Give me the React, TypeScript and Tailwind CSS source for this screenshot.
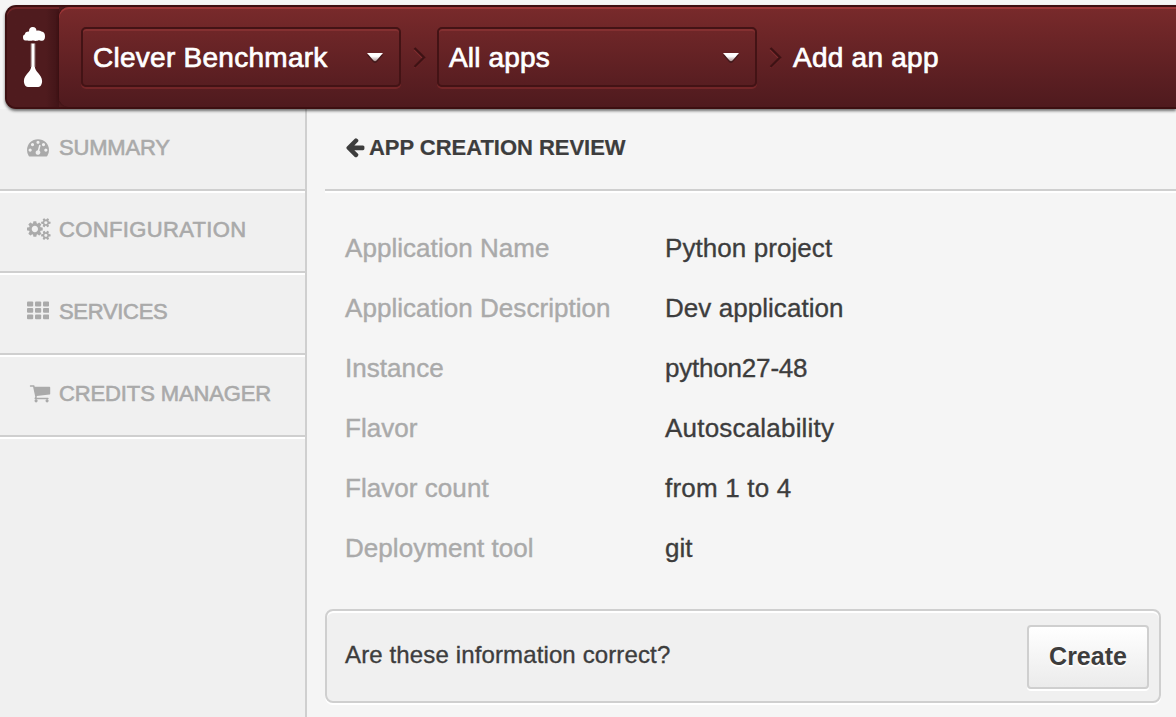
import React from "react";

const DOT = "q0-53-37.5-90.5t-90.5-37.5-90.5 37.5-37.5 90.5 37.5 90.5 90.5 37.5 90.5-37.5 37.5-90.5z";
const SMALL_COG =
  "v140q0 16-149 31-12 27-30 52 51 113 51 138 0 4-4 7-122 71-124 71-8 0-46-47t-52-68q-20 2-30 2t-30-2q-14 21-52 68t-46 47q-2 0-124-71-4-3-4-7 0-25 51-138-18-25-30-52-149-15-149-31v-140q0-16 149-31 13-29 30-52-51-113-51-138 0-4 4-7 4-2 35-20t59-34 30-16q8 0 46 46.5t52 67.5q20-2 30-2t30 2q51-71 92-112l6-2q4 0 124 70 4 3 4 7 0 25-51 138 17 23 30 52 149 15 149 31z";

function GaugeIcon() {
  return (
    <svg className="h-[22px] w-[22px]" viewBox="0 0 1792 1792" fill="currentColor">
      <path
        d={`M384 1152${DOT}m192-448${DOT}m428 481l101-382q6-26-7.5-48.5t-38.5-29.5-48 6.5-30 39.5l-101 382q-60 5-107 43.5t-63 98.5q-20 77 20 146t117 89 146-20 89-117q16-60-6-117t-72-91zm660-33${DOT}m-640-640${DOT}m448 192${DOT}m320 448q0 261-141 483-19 29-54 29h-1402q-35 0-54-29-141-221-141-483 0-182 71-348t191-286 286-191 348-71 348 71 286 191 191 286 71 348z`}
      />
    </svg>
  );
}

function CogsIcon() {
  return (
    <svg className="h-[22px] w-[24px]" viewBox="0 0 1955 1792" fill="currentColor">
      <path
        d={`M896 896q0-106-75-181t-181-75-181 75-75 181 75 181 181 75 181-75 75-181zm768 512q0-52-38-90t-90-38-90 38-38 90q0 53 37.5 90.5t90.5 37.5 90.5-37.5 37.5-90.5zm0-1024q0-52-38-90t-90-38-90 38-38 90q0 53 37.5 90.5t90.5 37.5 90.5-37.5 37.5-90.5zm-384 421v185q0 10-7 19.5t-16 10.5l-155 24q-11 35-32 76 34 48 90 115 7 11 7 20 0 12-7 19-23 30-82.5 89.5t-78.5 59.5q-11 0-21-7l-115-90q-37 19-77 31-11 108-23 155-7 24-30 24h-186q-11 0-20-7.5t-10-17.5l-23-153q-34-10-75-31l-118 89q-7 7-20 7-11 0-21-8-144-133-144-160 0-9 7-19 10-14 41-53t47-61q-23-44-35-82l-152-24q-10-1-17-9.5t-7-19.5v-185q0-10 7-19.5t16-10.5l155-24q11-35 32-76-34-48-90-115-7-11-7-20 0-12 7-20 22-30 82-89t79-59q11 0 21 7l115 90q34-18 77-32 11-108 23-154 7-24 30-24h186q11 0 20 7.5t10 17.5l23 153q34 10 75 31l118-89q8-7 20-7 11 0 21 8 144 133 144 160 0 8-7 19-12 16-42 54t-45 60q23 48 34 82l152 23q10 2 17 10.5t7 19.5zm640 533${SMALL_COG}m0-1024${SMALL_COG}`}
      />
    </svg>
  );
}

function GridIcon() {
  return (
    <svg className="h-[22px] w-[22px]" viewBox="0 0 22 22" fill="currentColor">
      {[1.6, 8, 14.4].map((y) =>
        [0, 8, 16].map((x) => <rect key={`${x}-${y}`} x={x} y={y} width="6.2" height="4.8" rx="1" />)
      )}
    </svg>
  );
}

function CartIcon() {
  return (
    <svg className="ml-[2px] h-[22px] w-[22px]" viewBox="0 0 1792 1792" fill="currentColor">
      <path d="M704 1536q0 52-38 90t-90 38-90-38-38-90 38-90 90-38 90 38 38 90zm896 0q0 52-38 90t-90 38-90-38-38-90 38-90 90-38 90 38 38 90zm128-1088v512q0 24-16.5 42.5t-40.5 21.5l-1044 122q13 60 13 70 0 16-24 64h920q26 0 45 19t19 45-19 45-45 19h-1024q-26 0-45-19t-19-45q0-11 8-31.5t16-36 21.5-40 15.5-29.5l-177-823h-204q-26 0-45-19t-19-45 19-45 45-19h256q16 0 28.5 6.5t19.5 15.5 13 24.5 8 26 5.5 29.5 4.5 26h1201q26 0 45 19t19 45z" />
    </svg>
  );
}

function BackArrow() {
  return (
    <svg className="-ml-px h-[22px] w-[22px] shrink-0" viewBox="0 0 1792 1792" fill="currentColor">
      <path d="M1664 896v128q0 53-32.5 90.5t-84.5 37.5h-704l293 294q38 36 38 90t-38 90l-75 76q-37 37-90 37-52 0-91-37l-651-652q-37-37-37-90 0-52 37-91l651-650q38-38 91-38 52 0 90 38l75 74q38 38 38 91t-38 91l-293 293h704q52 0 84.5 37.5t32.5 90.5z" />
    </svg>
  );
}

function Logo() {
  return (
    <svg className="h-[62px] w-[24px]" viewBox="0 0 24 62" fill="#fff">
      <path d="M3.500 14.5C1.500 14.500 1 13 1 11C1 9.500 1.800 8.700 3 8.300C3 6.500 4.500 5.500 7 5.600C7 2.500 8.200 1 10.800 1C13.200 1 14.300 2.200 14.500 4.800C16 4.300 18 4.300 19.500 5.600C22 6 23 7.600 23 10.3C23 13.200 22 14.800 20 14.800C18 14.800 17.500 14 16.500 14.300C15.500 15 13 15.200 11.500 14.500C9.500 14.500 8.500 15 6.500 14.700C5.500 14.400 4.700 14.500 3.500 14.500Z" />
      <path d="M9.300 17.500H12.700V40C12.700 46 20.100 48.500 20.100 55C20.100 58 18.500 61 16.300 61H5.900C3.600 61 1.900 58 1.900 55C1.900 48.500 9.300 46 9.300 40Z" />
      <path d="M9 17.500V41M13 17.500V41" stroke="#a58c8e" strokeWidth=".7" />
    </svg>
  );
}

function Crumb() {
  return (
    <svg className="mx-[11px] h-[24px] w-[14px] shrink-0" viewBox="0 0 14 24" fill="none" strokeWidth="2.4">
      <path d="M2.500 4.5L11.500 13.500L2.500 22.500" stroke="#822e31" />
      <path d="M2.500 3L12 12.500L2.500 22" stroke="#3e1214" />
    </svg>
  );
}

function Picker({ label, tracking }: { label: string; tracking: string }) {
  return (
    <button className="flex h-[60px] w-[320px] shrink-0 items-center justify-between rounded-[5px] border-2 border-[#431315] pl-[10px] pr-[15px] shadow-[inset_0_2px_0_#843031,0_2px_0_#732628]">
      <span className={`pt-[2px] ${tracking}`}>{label}</span>
      <svg className="h-[12px] w-[18px]" viewBox="0 0 18 12">
        <defs>
          <linearGradient id="caret" x1="0" y1="0" x2="0" y2="1">
            <stop offset=".4" stopColor="#fff" />
            <stop offset="1" stopColor="#a99292" />
          </linearGradient>
        </defs>
        <path d="M1 4H17L11 11Q9 13 7 11Z" fill="#43191b" />
        <path d="M1 2H17L10.500 9.500Q9 11 7.500 9.500Z" fill="url(#caret)" />
      </svg>
    </button>
  );
}

const menu = [
  { label: "SUMMARY", icon: <GaugeIcon />, tracking: "tracking-[-0.2px]" },
  { label: "CONFIGURATION", icon: <CogsIcon />, tracking: "tracking-[0.35px]" },
  { label: "SERVICES", icon: <GridIcon />, tracking: "tracking-[-0.3px]" },
  { label: "CREDITS MANAGER", icon: <CartIcon />, tracking: "tracking-[-0.12px]" },
];

const details = [
  { name: "Application Name", value: "Python project", tracking: "tracking-[0.07px]" },
  { name: "Application Description", value: "Dev application", tracking: "tracking-[0.05px]" },
  { name: "Instance", value: "python27-48", tracking: "tracking-[-0.2px]" },
  { name: "Flavor", value: "Autoscalability", tracking: "tracking-[0.2px]" },
  { name: "Flavor count", value: "from 1 to 4", tracking: "tracking-[0.2px]" },
  { name: "Deployment tool", value: "git", tracking: "tracking-[0px]" },
];

export default function App() {
  return (
    <div className="flex h-[717px] w-[1176px] flex-col overflow-hidden bg-[#f5f5f5] font-['Liberation_Sans',Arial,sans-serif] text-[#3d3d3d]">
      <header className="relative ml-[5px] mt-[5px] flex h-[104px] shrink-0 rounded-l-[11px] border-2 border-r-0 border-[#3e1012] bg-[#4f1b1e] shadow-[0_2px_3px_rgba(0,0,0,0.55)]">
        <div className="flex w-[52px] shrink-0 items-center justify-center rounded-l-[9px] bg-linear-to-r from-[#4f1b1e] from-75% to-[#411417] pb-px pl-px shadow-[inset_0_2px_0_#702528]">
          <Logo />
        </div>
        <div className="flex grow items-center rounded-l-[10px] bg-linear-to-b from-[#792a2b] to-[#4f1a1e] pl-[22px] text-[28px] leading-none text-white [-webkit-text-stroke:0.7px_white] shadow-[inset_0_2px_0_#9c3637,-1px_0_2px_#3a1012]">
          <Picker label="Clever Benchmark" tracking="tracking-[0.27px]" />
          <Crumb />
          <Picker label="All apps" tracking="tracking-[0.15px]" />
          <Crumb />
          <span className="pt-[2px] tracking-[0.25px]">Add an app</span>
        </div>
      </header>

      <div className="flex grow">
        <nav className="w-[307px] shrink-0 border-r-2 border-[#cfcfcf] bg-[#f0f0f0] text-[22px] text-[#aaaaaa] [-webkit-text-stroke:0.6px_#aaaaaa]">
          {menu.map((item) => (
            <a
              key={item.label}
              className="flex h-[82px] items-center border-b-2 border-[#cfcfcf] pb-[4px] pl-[27px] shadow-[0_2px_0_#fff]"
            >
              <span className="flex w-[32px] shrink-0">{item.icon}</span>
              <span className={`whitespace-nowrap ${item.tracking}`}>{item.label}</span>
            </a>
          ))}
        </nav>

        <main className="grow pl-[18px]">
          <h1 className="flex h-[82px] items-center border-b-2 border-[#cfcfcf] pb-[4px] pl-[20px] text-[22px] font-bold shadow-[0_2px_0_#fff]">
            <BackArrow />
            <span className="ml-[3px] tracking-[-0.03px] [-webkit-text-stroke:0.2px_#3d3d3d]">APP CREATION REVIEW</span>
          </h1>
          <dl className="mt-[27px] pl-[20px] text-[26px] leading-[60px]">
            {details.map((row) => (
              <div key={row.name} className="flex h-[60px]">
                <dt className="w-[320px] tracking-[0.05px] text-[#aaaaaa] [-webkit-text-stroke:0.4px_#aaaaaa]">
                  {row.name}
                </dt>
                <dd className={`[-webkit-text-stroke:0.35px_#3d3d3d] ${row.tracking}`}>{row.value}</dd>
              </div>
            ))}
          </dl>
          <div className="mr-[15px] mt-[31px] flex h-[94px] items-center justify-between rounded-[8px] border-2 border-[#cfcfcf] bg-[#f0f0f0] pl-[18px] pr-[10px] shadow-[inset_0_2px_0_#fff,0_2px_0_#fff]">
            <span className="pb-[2px] text-[24px] tracking-[0.13px] [-webkit-text-stroke:0.35px_#3d3d3d]">
              Are these information correct?
            </span>
            <button className="mt-[2px] h-[64px] w-[122px] rounded-[4px] border-2 border-[#cfcfcf] bg-linear-to-b from-white to-[#ebebeb] text-[25px] font-bold shadow-[0_2px_0_#fff] [text-shadow:0_2px_0_#fff]">
              Create
            </button>
          </div>
        </main>
      </div>
    </div>
  );
}
